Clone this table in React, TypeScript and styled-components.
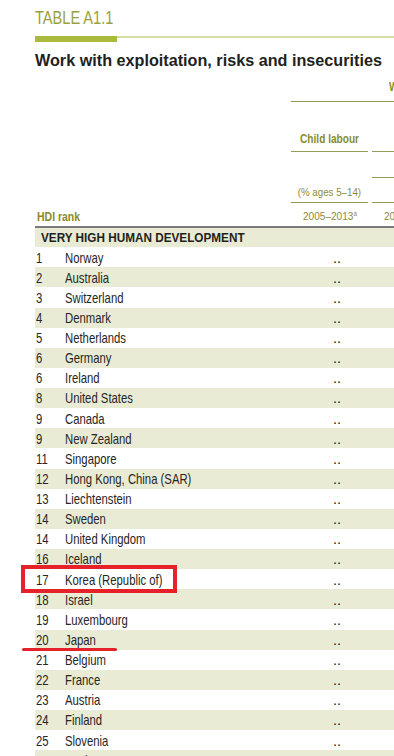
import React from "react";
import styled, { createGlobalStyle } from "styled-components";

const SANS = `"Liberation Sans", Arial, Helvetica, sans-serif`;

const OLIVE_TEXT = "#8a8b2b";
const OLIVE_LINE = "#929c58";
const SHADE = "#e9ebd4";
const RED = "#e52229";

const GlobalStyle = createGlobalStyle`
  html, body { margin: 0; padding: 0; background: #ffffff; }
  body { width: 394px; height: 756px; overflow: hidden; }
`;

const Page = styled.div`
  position: relative;
  width: 394px;
  height: 756px;
  overflow: hidden;
  padding-left: 35px;
  box-sizing: border-box;
  font-family: ${SANS};
`;

const Sheet = styled.div`
  width: 560px;
`;

/* condensed face: the report uses a condensed grotesque */
const Narrow = styled.span<{ $sx: number; $origin?: string }>`
  display: inline-block;
  white-space: nowrap;
  transform: scaleX(${(p) => p.$sx});
  transform-origin: ${(p) => p.$origin ?? "left"} center;
`;

const TableLabel = styled.div`
  padding-top: 7.6px;
  height: 36px;
  box-sizing: border-box;
  font-size: 18px;
  line-height: 20px;
  color: #98a33c;
`;

const Rule = styled.div`
  display: flex;
  align-items: flex-start;
  height: 6px;
`;

const RuleThick = styled.div`
  width: 82px;
  height: 6px;
  background: #a9ba3c;
`;

const RuleThin = styled.div`
  flex: 1;
  height: 2px;
  background: #d5dca6;
`;

const Title = styled.h1`
  margin: 9px 0 0;
  font-family: ${SANS};
  font-weight: 700;
  font-size: 16.2px;
  line-height: 19px;
  color: #231f20;
  white-space: nowrap;
`;

const HeadRow = styled.div<{ $h: number }>`
  display: grid;
  grid-template-columns: 256px 77px 4px 77px 4px 77px;
  height: ${(p) => p.$h}px;
`;

const GroupCell = styled.div`
  grid-column: 2 / -1;
  box-sizing: border-box;
  padding: 10.4px 0 0 98px;
  border-bottom: 1px solid ${OLIVE_LINE};
  font-weight: 700;
  font-size: 12.5px;
  line-height: 14px;
  color: ${OLIVE_TEXT};
  white-space: nowrap;
  overflow: hidden;
`;

const HeadCell = styled.div<{ $pt?: number; $line?: boolean; $bold?: boolean; $align?: string }>`
  box-sizing: border-box;
  padding-top: ${(p) => p.$pt ?? 0}px;
  border-bottom: ${(p) => (p.$line ? `1px solid ${OLIVE_LINE}` : "none")};
  font-weight: ${(p) => (p.$bold ? 700 : 400)};
  font-size: ${(p) => (p.$bold ? 12.2 : 11.2)}px;
  line-height: 14px;
  color: ${(p) => (p.$bold ? OLIVE_TEXT : "#8d8a40")};
  text-align: ${(p) => p.$align ?? "center"};
  white-space: nowrap;
`;

const RankHead = styled(HeadCell)`
  padding-left: 2px;
`;

const Sup = styled.sup`
  font-size: 7px;
  line-height: 0;
  vertical-align: 4px;
`;

const DarkRule = styled.div`
  height: 2px;
  margin-top: 1px;
  background: #7a7a7a;
`;

const Band = styled.div`
  height: 19.2px;
  box-sizing: border-box;
  padding: 0.6px 0 0 6px;
  background: ${SHADE};
  font-weight: 700;
  font-size: 13.5px;
  line-height: 18.6px;
  color: #231f20;
  white-space: nowrap;
`;

const Row = styled.div<{ $shaded: boolean }>`
  display: grid;
  grid-template-columns: 30px 226px 77px 4px 77px;
  height: 20.14px;
  background: ${(p) => (p.$shaded ? SHADE : "#ffffff")};
  font-size: 14.5px;
  color: #262626;
`;

const Cell = styled.div<{ $pl?: number }>`
  padding-top: 2.4px;
  padding-left: ${(p) => p.$pl ?? 0}px;
  line-height: 17.4px;
  white-space: nowrap;
`;

const Highlight = styled.div`
  position: absolute;
  left: 21px;
  top: 565px;
  width: 156px;
  height: 28px;
  box-sizing: border-box;
  border: 4px solid ${RED};
`;

const Underline = styled.div`
  position: absolute;
  left: 22px;
  top: 647.5px;
  width: 95px;
  height: 3px;
  border-radius: 2px;
  background: ${RED};
`;

const countries: [string, string][] = [
  ["1", "Norway"],
  ["2", "Australia"],
  ["3", "Switzerland"],
  ["4", "Denmark"],
  ["5", "Netherlands"],
  ["6", "Germany"],
  ["6", "Ireland"],
  ["8", "United States"],
  ["9", "Canada"],
  ["9", "New Zealand"],
  ["11", "Singapore"],
  ["12", "Hong Kong, China (SAR)"],
  ["13", "Liechtenstein"],
  ["14", "Sweden"],
  ["14", "United Kingdom"],
  ["16", "Iceland"],
  ["17", "Korea (Republic of)"],
  ["18", "Israel"],
  ["19", "Luxembourg"],
  ["20", "Japan"],
  ["21", "Belgium"],
  ["22", "France"],
  ["23", "Austria"],
  ["24", "Finland"],
  ["25", "Slovenia"],
  ["26", "Spain"],
];

export default function App() {
  return (
    <>
      <GlobalStyle />
      <Page>
        <Sheet>
          <TableLabel>
            <Narrow $sx={0.81}>TABLE A1.1</Narrow>
          </TableLabel>
          <Rule>
            <RuleThick />
            <RuleThin />
          </Rule>
          <Title>Work with exploitation, risks and insecurities</Title>

          <HeadRow $h={32}>
            <div />
            <GroupCell>
              <Narrow $sx={0.81}>Working poor</Narrow>
            </GroupCell>
          </HeadRow>
          <HeadRow $h={50}>
            <div />
            <HeadCell $pt={30.3} $bold $line>
              <Narrow $sx={0.83} $origin="center">
                Child labour
              </Narrow>
            </HeadCell>
            <div />
            <HeadCell $line />
            <div />
            <HeadCell $line />
          </HeadRow>
          <HeadRow $h={26}>
            <div />
            <HeadCell />
            <div />
            <HeadCell $line />
            <div />
            <HeadCell $line />
          </HeadRow>
          <HeadRow $h={25}>
            <div />
            <HeadCell $pt={6.6} $line>
              <Narrow $sx={0.87} $origin="center">
                (% ages 5–14)
              </Narrow>
            </HeadCell>
            <div />
            <HeadCell $line />
            <div />
            <HeadCell $line />
          </HeadRow>
          <HeadRow $h={22}>
            <RankHead $pt={6.6} $bold $align="left">
              <Narrow $sx={0.86}>HDI rank</Narrow>
            </RankHead>
            <HeadCell $pt={5.8}>
              <Narrow $sx={0.9} $origin="center">
                2005–2013<Sup>a</Sup>
              </Narrow>
            </HeadCell>
            <div />
            <HeadCell $pt={5.8}>
              <Narrow $sx={0.9} $origin="center">
                2005–2012<Sup>b</Sup>
              </Narrow>
            </HeadCell>
          </HeadRow>
          <DarkRule />
          <Band>
            <Narrow $sx={0.87}>VERY HIGH HUMAN DEVELOPMENT</Narrow>
          </Band>
          {countries.map(([rank, name], i) => (
            <Row key={rank + name} $shaded={i % 2 === 1}>
              <Cell $pl={1}>
                <Narrow $sx={0.78}>{rank}</Narrow>
              </Cell>
              <Cell>
                <Narrow $sx={0.78}>{name}</Narrow>
              </Cell>
              <Cell $pl={42}>..</Cell>
              <div />
              <Cell $pl={42}>..</Cell>
            </Row>
          ))}
        </Sheet>
        <Highlight />
        <Underline />
      </Page>
    </>
  );
}
